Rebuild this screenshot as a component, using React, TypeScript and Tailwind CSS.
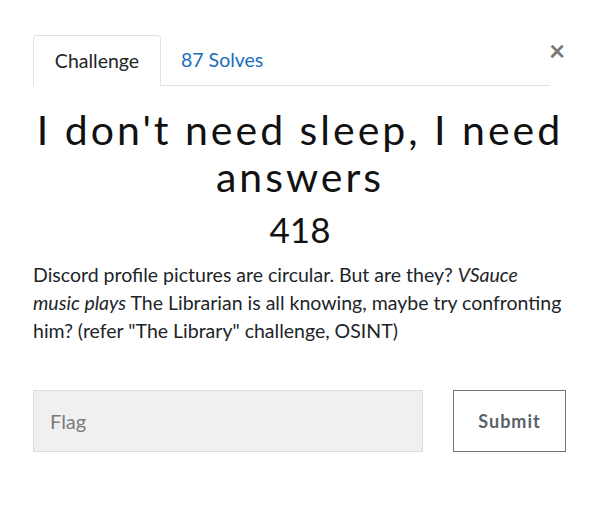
import React from "react";

export default function App() {
  return (
    <div className="w-[600px] h-[507px] bg-white relative" style={{ fontFamily: "Lato, 'Open Sans', sans-serif" }}>
      <button className="absolute left-[549px] top-[36px] text-[#777] text-[28px] font-bold leading-none">
        ×
      </button>
      <div className="px-[33px] pt-[35px]">
        <div className="flex w-[517px] border-b border-[#dee2e6]">
          <div className="w-[128px] h-[51px] -mb-px border border-[#dee2e6] border-b-white rounded-t-[4px] bg-white flex items-center justify-center text-[19.5px] text-[#212529]">
            Challenge
          </div>
          <div className="px-[20px] h-[50px] flex items-center text-[19.5px] text-[#1a6dbb]">
            87 Solves
          </div>
        </div>
        <h2 className="mt-[20px] text-center text-[41px] leading-[47px] tracking-[3px] text-[#111] font-normal">
          I don't need sleep, I need answers
        </h2>
        <div className="mt-[9px] text-center text-[35px] leading-[40px] text-[#111]">418</div>
        <p className="mt-[12px] mr-[-12px] text-[19.5px] leading-[28px] text-[#212529]">
          Discord profile pictures are circular. But are they? <em>VSauce</em>
          <br />
          <em>music plays</em> The Librarian is all knowing, maybe try confronting
          <br />
          him? (refer "The Library" challenge, OSINT)
        </p>
        <div className="mt-[45px] flex items-center">
          <div className="w-[390px] h-[62px] bg-[#f0f0f0] border border-[#dcdcdc] flex items-center px-[16px] text-[20px] text-[#7b7b7b]">
            Flag
          </div>
          <button className="ml-[30px] w-[113px] h-[62px] border border-[#6c757d] text-[#5a6269] text-[18px] font-bold tracking-[1px]">
            Submit
          </button>
        </div>
      </div>
    </div>
  );
}
